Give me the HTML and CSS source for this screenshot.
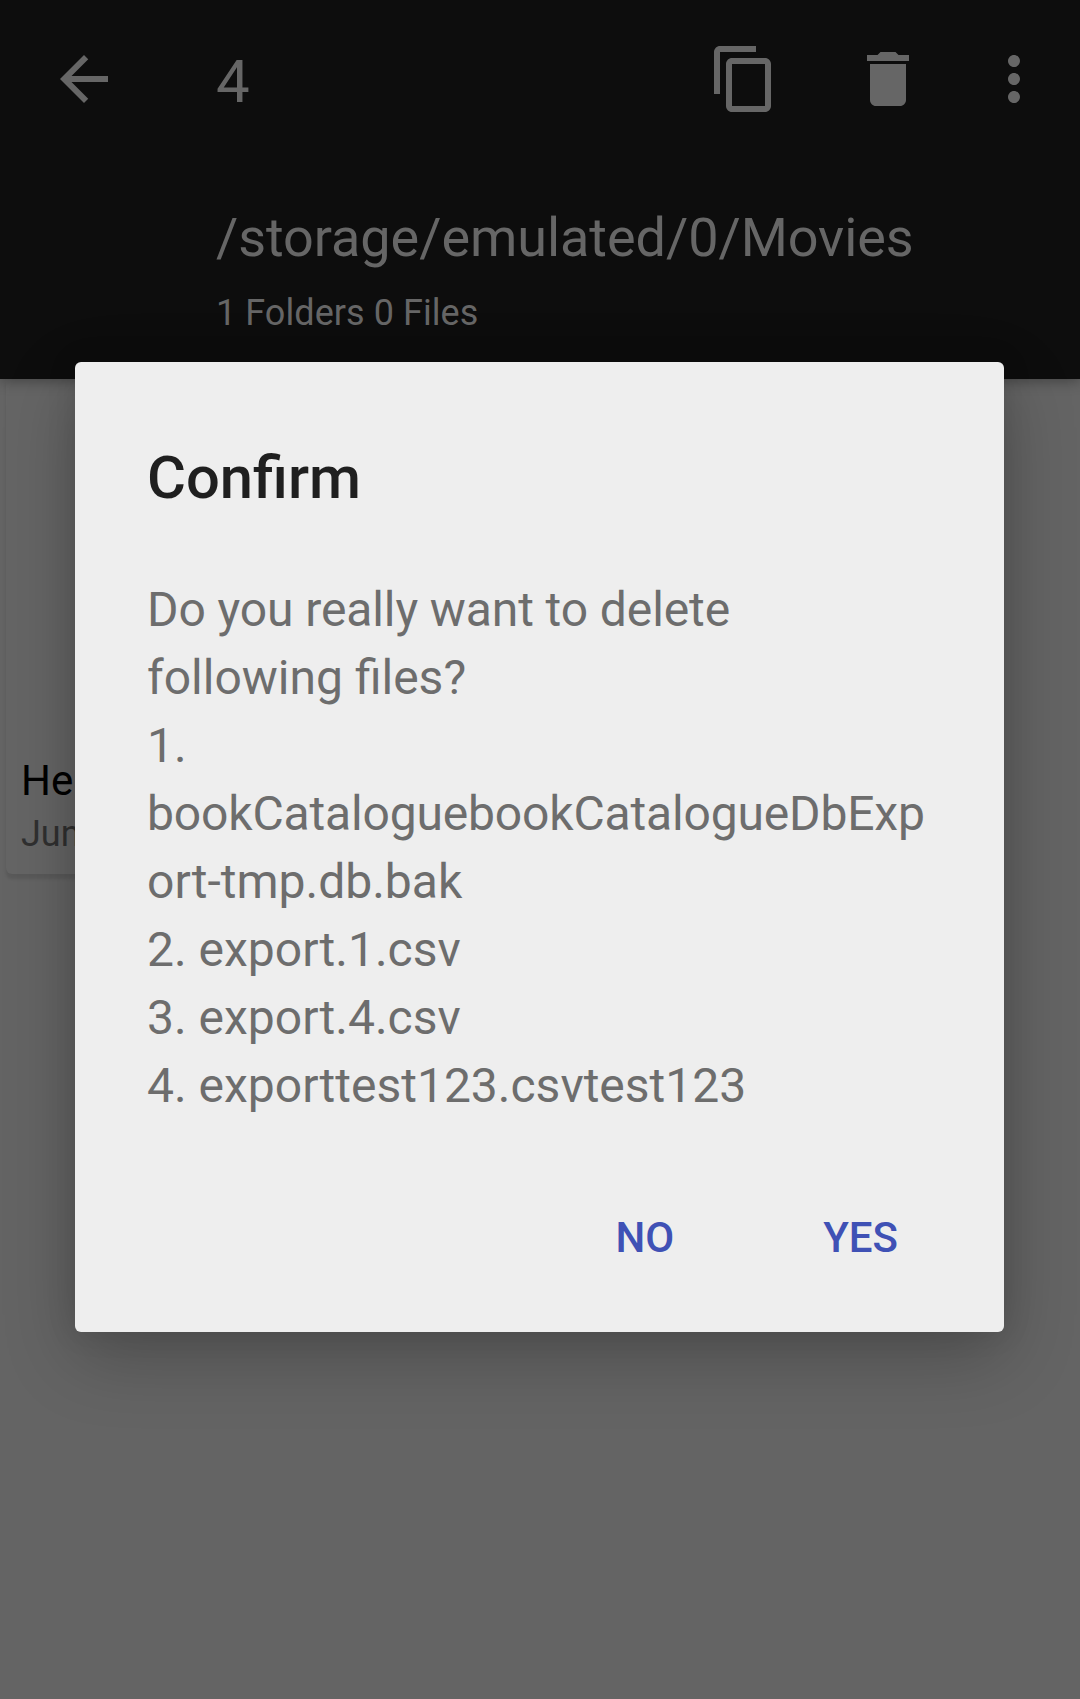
FILE: index.html
```html
<!DOCTYPE html>
<html lang="en">
<head>
<meta charset="utf-8">
<title>Confirm</title>
<link rel="stylesheet" href="styles.css">
</head>
<body>
<div class="screen">
  <header class="appbar">
    <div class="toolbar">
      <svg class="icon" viewBox="0 0 24 24"><path d="M20 11H7.83l5.59-5.59L12 4l-8 8 8 8 1.41-1.41L7.83 13H20v-2z"/></svg>
      <span class="count">4</span>
      <div class="actions">
        <svg class="icon" viewBox="0 0 24 24"><path d="M16 1H4c-1.1 0-2 .9-2 2v14h2V3h12V1zm3 4H8c-1.1 0-2 .9-2 2v14c0 1.1.9 2 2 2h11c1.1 0 2-.9 2-2V7c0-1.1-.9-2-2-2zm0 16H8V7h11v14z"/></svg>
        <svg class="icon" viewBox="0 0 24 24"><path d="M6 19c0 1.1.9 2 2 2h8c1.1 0 2-.9 2-2V7H6v12zM19 4h-3.5l-1-1h-5l-1 1H5v2h14V4z"/></svg>
        <svg class="icon" viewBox="0 0 24 24"><path d="M12 8c1.1 0 2-.9 2-2s-.9-2-2-2-2 .9-2 2 .9 2 2 2zm0 2c-1.1 0-2 .9-2 2s.9 2 2 2 2-.9 2-2-.9-2-2-2zm0 6c-1.1 0-2 .9-2 2s.9 2 2 2 2-.9 2-2-.9-2-2-2z"/></svg>
      </div>
    </div>
    <div class="path">/storage/emulated/0/Movies</div>
    <div class="summary">1 Folders 0 Files</div>
  </header>
  <main class="content">
    <div class="card">
      <div class="card-name">He</div>
      <div class="card-date">Jun</div>
    </div>
  </main>
  <div class="dialog" role="dialog">
    <h1 class="title">Confirm</h1>
    <div class="message">
      <div class="question">Do you really want to delete following files?</div>
      <div>1. <span class="long-name">bookCataloguebookCatalogueDbExp</span>ort-tmp.db.bak</div>
      <div>2. export.1.csv</div>
      <div>3. export.4.csv</div>
      <div>4. exporttest123.csvtest123</div>
    </div>
    <div class="buttons">
      <span class="button">NO</span>
      <span class="button">YES</span>
    </div>
  </div>
</div>
</body>
</html>
```

FILE: styles.css
```css
* { box-sizing: border-box; }
body { margin: 0; font-family: Roboto, sans-serif; }
.screen {
  position: relative;
  width: 1080px;
  height: 1699px;
  overflow: hidden;
  background: #646464;
  display: flex;
  flex-direction: column;
}
.appbar {
  height: 379px;
  flex: none;
  background: #0d0d0d;
  color: #666;
  box-shadow: 0 3px 12px rgba(0, 0, 0, .3);
  z-index: 1;
}
.toolbar {
  display: flex;
  align-items: center;
  height: 158px;
  padding: 0 30px 0 48px;
}
.icon { display: block; width: 72px; height: 72px; fill: #666; }
.count { margin-left: 96px; font-size: 60px; line-height: 70px; padding-top: 5px; }
.actions { display: flex; gap: 72px; margin-left: auto; }
.actions .icon:last-child { margin-left: -18px; }
.path { margin: 47px 0 0 216px; font-size: 54px; line-height: 66px; letter-spacing: -.06px; }
.summary { margin: 21px 0 0 216px; font-size: 36px; line-height: 42px; letter-spacing: .06px; }
.content { flex: 1; }
.card {
  width: 528px;
  height: 495px;
  margin-left: 6px;
  padding: 378px 0 0 15px;
  border-radius: 0 0 6px 6px;
  background: #656565;
  box-shadow: 0 5px 3px rgba(0, 0, 0, .1);
}
.card-name { font-size: 42px; line-height: 48px; color: #000; }
.card-date { margin-top: 8px; font-size: 36px; line-height: 42px; color: #303030; }
.dialog {
  position: absolute;
  left: 75px;
  top: 362px;
  z-index: 2;
  width: 929px;
  height: 970px;
  padding: 81px 72px 0;
  border-radius: 6px;
  background: #eee;
  box-shadow: 0 24px 72px rgba(0, 0, 0, .24), 0 0 30px rgba(0, 0, 0, .1);
}
.title { margin: 0; font-size: 59.7px; line-height: 70px; font-weight: 500; color: #1f1f1f; }
.message {
  margin-top: 63px;
  font-size: 48px;
  line-height: 68px;
  color: #6d6d6d;
  overflow-wrap: break-word;
}
.question:first-line { letter-spacing: -.1px; }
.long-name { letter-spacing: -.16px; }
.buttons {
  display: flex;
  justify-content: flex-end;
  gap: 149px;
  margin-top: 93px;
  padding-right: 34px;
  font-size: 42px;
  line-height: 50px;
  font-weight: 500;
  color: #3f51b5;
}
```
